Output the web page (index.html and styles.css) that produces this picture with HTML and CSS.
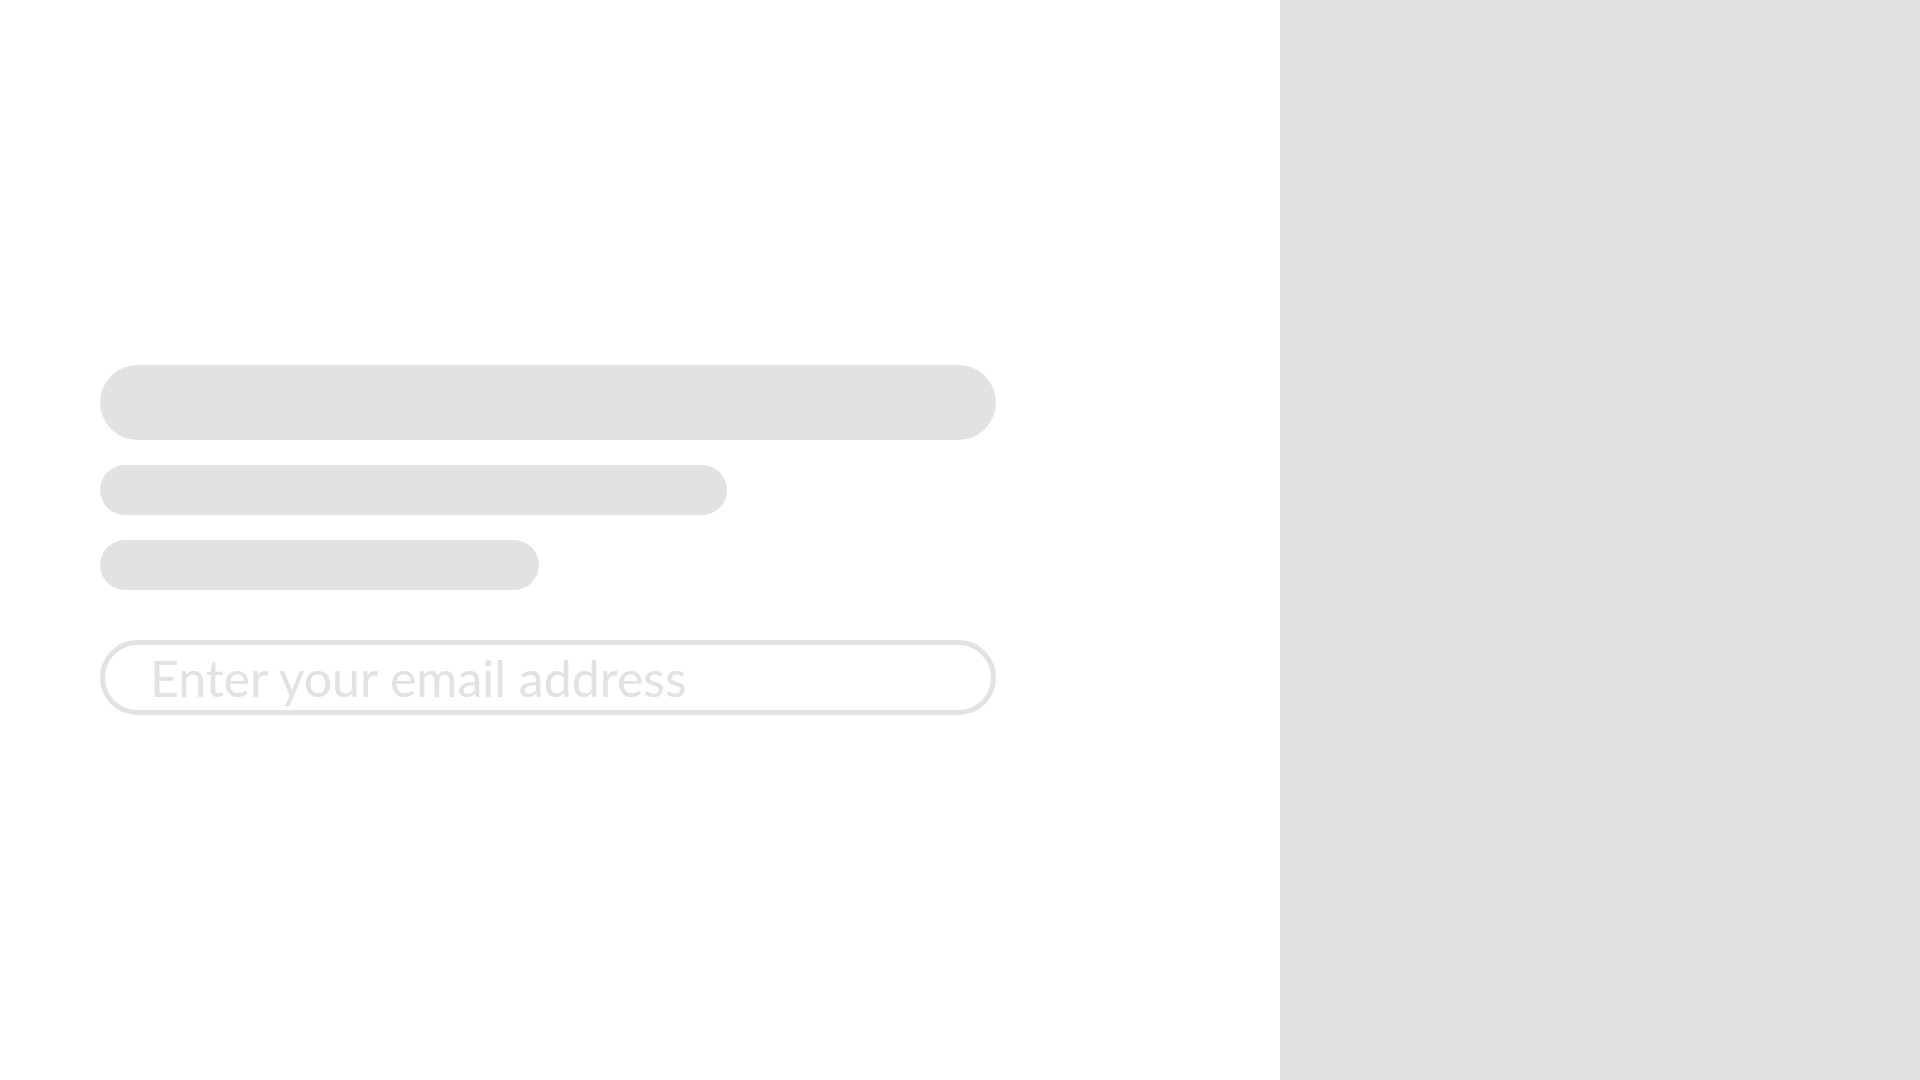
FILE: index.html
```html
<!DOCTYPE html>
<html lang="en">
<head>
<meta charset="utf-8">
<title>Sign up</title>
<link rel="stylesheet" href="styles.css">
</head>
<body>
<div class="page">
  <main class="left">
    <div class="content">
      <div class="bar bar-title"></div>
      <div class="bar bar-line bar-line-a"></div>
      <div class="bar bar-line bar-line-b"></div>
      <input class="email" type="email" placeholder="Enter your email address">
    </div>
  </main>
  <aside class="right"></aside>
</div>
</body>
</html>
```
FILE: styles.css
```css
* { box-sizing: border-box; }
html, body { margin: 0; padding: 0; }
body {
  width: 1920px;
  height: 1080px;
  background: #ffffff;
  font-family: "Lato", "Liberation Sans", sans-serif;
  overflow: hidden;
}
.page {
  display: grid;
  grid-template-columns: 1280px 640px;
  height: 1080px;
}
.left {
  display: flex;
  align-items: center;
  padding: 0 100px;
}
.content {
  width: 896px;
  display: flex;
  flex-direction: column;
}
.bar {
  background: #e2e2e2;
  border-radius: 999px;
}
.bar-title {
  height: 75px;
  width: 100%;
}
.bar-line {
  height: 50px;
  margin-top: 25px;
}
.bar-line-a { width: 627px; }
.bar-line-b { width: 439px; }
.email {
  margin-top: 50px;
  height: 75px;
  width: 100%;
  border: 5px solid #e2e2e2;
  border-radius: 999px;
  padding: 0 45px;
  font-family: "Lato", "Liberation Sans", sans-serif;
  font-size: 50px;
  color: #b0b0b0;
  background: #ffffff;
  outline: none;
}
.email::placeholder {
  color: #e2e2e2;
  opacity: 1;
}
.right {
  background: #e2e2e2;
}
```
